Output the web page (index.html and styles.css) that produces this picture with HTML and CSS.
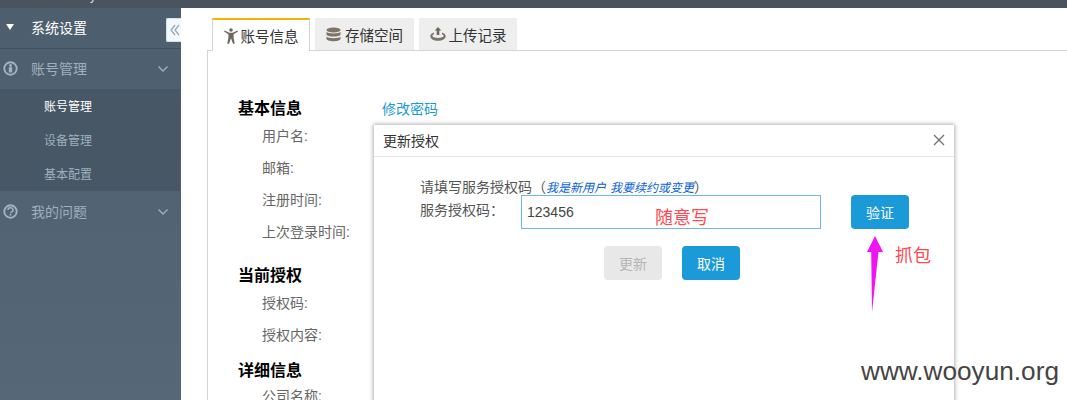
FILE: index.html
```html
<!DOCTYPE html>
<html lang="zh">
<head>
<meta charset="utf-8">
<title>账号信息</title>
<link rel="stylesheet" href="styles.css">
</head>
<body>
<div class="topbar"><span class="top-text">y</span></div>
<div class="layout">
  <aside class="sidebar">
    <div class="side-head">
      <svg class="tri" width="10" height="8" viewBox="0 0 10 8"><path d="M1 1h8L5 7z" fill="#fff"/></svg>
      <span>系统设置</span>
    </div>
    <div class="side-item">
      <svg class="side-icon" width="15" height="15" viewBox="0 0 15 15"><circle cx="7.500" cy="7.500" r="6.200" fill="none" stroke="#a3b3c0" stroke-width="1.900"/><circle cx="7.500" cy="4.500" r="1.400" fill="#a3b3c0"/><rect x="5.800" y="6.200" width="3.400" height="5.300" fill="#a3b3c0"/></svg>
      <span class="side-label">账号管理</span>
      <svg class="chev" width="12" height="8" viewBox="0 0 12 8"><path d="M1.500 1.500 6 6l4.500-4.500" fill="none" stroke="#9fb0bd" stroke-width="1.400"/></svg>
    </div>
    <div class="submenu">
      <div class="sub-item active">账号管理</div>
      <div class="sub-item">设备管理</div>
      <div class="sub-item">基本配置</div>
    </div>
    <div class="side-item">
      <svg class="side-icon" width="15" height="15" viewBox="0 0 15 15"><circle cx="7.500" cy="7.500" r="6.200" fill="none" stroke="#a3b3c0" stroke-width="1.900"/><path d="M5 6a2.500 2.200 0 1 1 3.700 1.900c-.8.400-1.200.8-1.200 1.400" fill="none" stroke="#a3b3c0" stroke-width="1.500"/><rect x="6.700" y="10" width="1.600" height="1.600" fill="#a3b3c0"/></svg>
      <span class="side-label">我的问题</span>
      <svg class="chev" width="12" height="8" viewBox="0 0 12 8"><path d="M1.500 1.500 6 6l4.500-4.500" fill="none" stroke="#9fb0bd" stroke-width="1.400"/></svg>
    </div>
    <button class="collapse" type="button" aria-label="收起">
      <svg width="10" height="12" viewBox="0 0 10 12"><path d="M5 1 1 6l4 5M9 1 5 6l4 5" fill="none" stroke="#9aa9b6" stroke-width="1.300"/></svg>
    </button>
  </aside>
  <main class="main">
    <div class="tabs">
      <div class="tab current">
        <svg width="14" height="16" viewBox="0 0 14 16"><circle cx="7" cy="2" r="1.800" fill="#6f675c"/><path d="M.5 2.600 5.300 4.800h3.400l4.800-2.200.4.900-4.300 2.700V10l1.200 5.800H9L7 10.300 5 15.800H3.200L4.400 10V6.200L.1 3.500z" fill="#6f675c"/></svg>
        <span>账号信息</span>
      </div>
      <div class="tab wide">
        <svg width="15" height="15" viewBox="0 0 15 15"><ellipse cx="7.500" cy="3" rx="7" ry="2.600" fill="#7d7468"/><path d="M.5 4.800c1 2.200 13 2.200 14 0v3c-1 2.400-13 2.400-14 0zM.5 9.600c1 2.200 13 2.200 14 0v2.400c-1 3-13 3-14 0z" fill="#7d7468"/></svg>
        <span>存储空间</span>
      </div>
      <div class="tab">
        <svg width="16" height="14" viewBox="0 0 16 14"><path d="M8 0l3.300 3.400H9.300V8H6.700V3.400H4.700z" fill="#6f675c"/><path d="M4 5.500C1.500 6.300.3 7.500.3 9.200c0 2.700 3.300 4.500 7.700 4.500s7.700-1.800 7.700-4.500c0-1.700-1.200-2.900-3.700-3.700v1.700c1 .4 1.600 1 1.600 1.700 0 .9-2.400 2-5.600 2s-5.600-1.100-5.600-2c0-.7.600-1.300 1.600-1.700z" fill="#7d7468"/></svg>
        <span>上传记录</span>
      </div>
    </div>
    <section class="panel">
      <div class="group-title-row">
        <h2 class="group-title">基本信息</h2>
        <a class="pw-link" href="#">修改密码</a>
      </div>
      <div class="field">用户名:</div>
      <div class="field">邮箱:</div>
      <div class="field">注册时间:</div>
      <div class="field">上次登录时间:</div>
      <h2 class="group-title second">当前授权</h2>
      <div class="field">授权码:</div>
      <div class="field">授权内容:</div>
      <h2 class="group-title third">详细信息</h2>
      <div class="field">公司名称:</div>
    </section>
  </main>
</div>

<div class="modal">
  <div class="modal-head">
    <span>更新授权</span>
    <svg width="12" height="12" viewBox="0 0 12 12"><path d="M1 1l10 10M11 1 1 11" stroke="#6f6f6f" stroke-width="1.300" fill="none"/></svg>
  </div>
  <div class="modal-body">
    <div class="hint">请填写服务授权码（<a class="hint-link" href="#">我是新用户</a> <a class="hint-link" href="#">我要续约或变更</a>）</div>
    <div class="code-row">
      <label class="code-label">服务授权码：</label>
      <div class="code-input">123456</div>
      <button class="btn primary verify" type="button">验证</button>
    </div>
    <div class="actions">
      <button class="btn disabled" type="button">更新</button>
      <button class="btn primary" type="button">取消</button>
    </div>
  </div>
</div>

<div class="note note-any">随意写</div>
<div class="note note-cap">抓包</div>
<svg class="arrow" width="18" height="76" viewBox="0 0 18 76"><path d="M9 0 17 16H12.500L6 76 5.200 16H1z" fill="#f014f5"/></svg>
<div class="watermark">www.wooyun.org</div>
</body>
</html>
```
FILE: styles.css
```css
* { box-sizing: border-box; }
html, body { margin: 0; height: 400px; overflow: hidden; background: #fff; }
body { font-family: "Liberation Sans", "Noto Sans CJK SC", sans-serif; font-size: 14px; color: #666; position: relative; }
.topbar { height: 8px; background: #4b545e; overflow: hidden; padding-left: 90px; }
.top-text { display: block; margin-top: -11px; line-height: 14px; font-size: 12px; color: #dfe3e8; }
.layout { display: flex; height: 392px; }
.sidebar { width: 181px; flex: none; position: relative; background: linear-gradient(#4d5e6e, #566878); color: #9fb0bd; }
.side-head { height: 41px; display: flex; align-items: center; padding: 0 0 3px 5px; color: #fff; font-size: 14px; border-bottom: 1px solid #43525f; }
.tri { margin-right: 16px; margin-left: 0; }
.side-item { height: 40px; display: flex; align-items: center; padding-left: 3px; font-size: 14px; }
.side-head + .side-item { padding-bottom: 2px; }
.side-icon { flex: none; }
.side-label { margin-left: 13px; flex: 1; }
.chev { margin-right: 12px; margin-top: 2px; }
.submenu { background: #475765; margin-right: 1px; height: 102px; }
.sub-item { height: 34px; line-height: 36px; padding-left: 44px; font-size: 12px; }
.sub-item.active { color: #fff; }
.collapse { position: absolute; top: 10px; right: 0; width: 15px; height: 24px; padding: 0 0 0 1px; display: flex; align-items: center; justify-content: center; border: 1px solid #cfe2ef; border-right: 0; background: #f2f8fc; border-radius: 2px 0 0 2px; }
.main { flex: 1; padding: 10px 0 0 26px; min-width: 0; }
.tabs { display: flex; gap: 5px; height: 33px; padding-left: 5px; position: relative; z-index: 1; }
.tab { width: 98px; height: 32px; display: flex; align-items: center; justify-content: center; gap: 3px; background: #eee; color: #333; font-size: 14.500px; }
.tab.wide { width: 99px; gap: 4px; }
.tab.current { height: 33px; background: #fff; border: 1px solid #d4d4d4; border-top: 2px solid #f6b400; border-bottom: 0; }
.panel { border: 1px solid #d4d4d4; border-right: 0; border-bottom: 0; margin-top: -1px; height: 360px; padding: 46px 0 0 30px; }
.group-title-row { display: flex; align-items: flex-start; height: 23px; }
.group-title { margin: 0; font-size: 16px; font-weight: 700; line-height: 24px; height: 23px; color: #000; width: 144px; }
.group-title.second { margin-top: 16px; }
.group-title.third { margin-top: 8px; height: 21px; }
.pw-link { color: #1a9ad8; text-decoration: none; font-size: 14px; line-height: 24px; }
.field { height: 32px; line-height: 32px; padding-left: 24px; font-size: 14px; color: #666; }
.modal { position: absolute; left: 374px; top: 125px; width: 580px; height: 300px; background: #fff; box-shadow: 0 0 4px 1px rgba(0,0,0,.3); }
.modal-head { height: 32px; display: flex; align-items: center; justify-content: space-between; padding: 0 9px 2px; font-size: 14px; color: #333; border-bottom: 1px solid #e5e5e5; }
.modal-body { padding: 21px 0 0 46px; }
.hint { font-size: 14px; color: #555; line-height: 18px; white-space: nowrap; }
.hint-link { color: #0a5fd8; font-style: italic; font-size: 12px; text-decoration: none; }
.code-row { display: flex; align-items: center; margin-top: -2px; height: 34px; }
.code-label { width: 101px; flex: none; font-size: 14px; color: #555; padding-bottom: 6px; }
.code-input { width: 300px; height: 34px; line-height: 32px; padding-left: 5px; border: 1px solid #6db7ee; color: #444; font-size: 14px; }
.btn { width: 58px; height: 34px; border: 0; border-radius: 4px; font-size: 14px; font-family: inherit; padding: 0; }
.primary { background: #1a9ad8; color: #fff; }
.disabled { background: #e8e8e8; color: #b5b5b5; }
.verify { margin-left: 30px; }
.actions { display: flex; gap: 20px; margin-top: 17px; padding-left: 184px; }
.note { position: absolute; color: #ff4a55; font-size: 18px; line-height: 20px; }
.note-any { left: 655px; top: 208px; }
.note-cap { left: 895px; top: 246px; }
.arrow { position: absolute; left: 866px; top: 236px; }
.watermark { position: absolute; left: 861px; top: 356px; font-family: "Liberation Sans", sans-serif; font-size: 26.200px; line-height: 30px; color: #444; }
```
